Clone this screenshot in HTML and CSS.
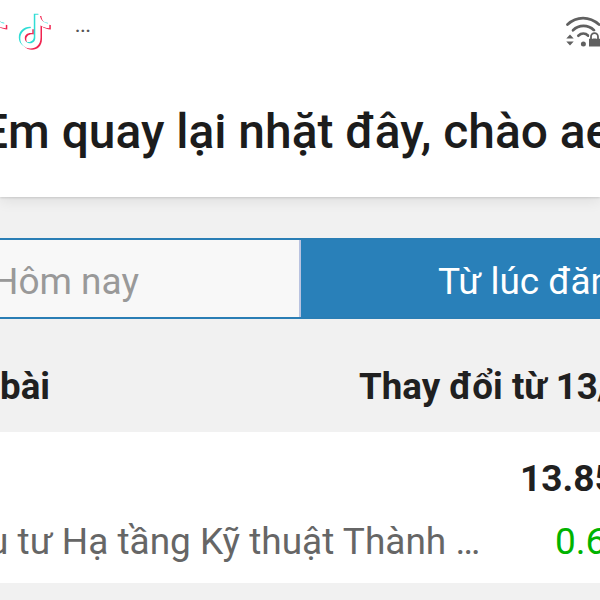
FILE: index.html
```html
<!DOCTYPE html>
<html lang="vi">
<head>
<meta charset="utf-8">
<title>Em quay lại nhặt đây</title>
<link rel="stylesheet" href="styles.css">
</head>
<body>
<header class="top">
  <div class="status">
    <svg class="apps" width="60" height="62" viewBox="0 0 60 62" fill="none">
      <defs>
        <path id="note" d="M35 14.500h4.500c.5 5 4 8.500 9.500 9v4.500c-3.500-.1-6.800-1.300-8.800-3v12.500c0 7-4.500 10.700-10 10.700-6 0-10.200-4.500-10.200-10 0-6.500 5.500-11 12-10.500v5.200c-4.500-.8-7.500 1.500-7.500 5 0 3 2.500 5 5.300 5 3.200 0 5.200-2.300 5.200-5.500z"/>
      </defs>
      <g id="logo">
        <use href="#note" x="1.800" y="1.500" fill="#f02450"/>
        <use href="#note" x="-1.200" y="-.8" fill="#30ddd5"/>
        <use href="#note" x=".3" y=".3" fill="#fff"/>
      </g>
      <use href="#logo" x="-43.500"/>
    </svg>
    <span class="more">...</span>
    <svg class="wifi" width="36" height="62" viewBox="0 0 36 62" fill="none">
      <g stroke="#606060" stroke-width="2.700" stroke-linecap="round">
        <path d="M3.500 24.500C12.500 16 25.500 16 35 24.500"/>
        <path d="M9 30.200C15 24.500 24 24.500 30 30.200"/>
        <path d="M14.300 35.700c3-2.700 7-2.700 10 0"/>
      </g>
      <circle cx="19.400" cy="44" r="2.500" fill="#606060"/>
      <path d="M2.300 38.500 6 34.500l3.700 4zM2.300 41.500 6 45.500l3.700-4z" fill="#606060"/>
      <path d="M24 37h13v11H24z" fill="#fff"/>
      <path d="M25 38.500h11V46.500H25z" fill="#606060"/>
      <path d="M27 38.500v-1.800a3.500 3.500 0 0 1 7 0v1.800" stroke="#fff" stroke-width="4"/>
      <path d="M27 39v-2.300a3.500 3.500 0 0 1 7 0V39" stroke="#606060" stroke-width="1.800"/>
    </svg>
  </div>
  <h1 class="title">Em quay lại nhặt đây, chào ae</h1>
</header>
<main>
  <nav class="tabs">
    <div class="tab">Hôm nay</div>
    <div class="tab active">Từ lúc đăng</div>
  </nav>
  <div class="heads">
    <span>bài</span>
    <span class="since">Thay đổi từ 13/</span>
  </div>
  <section class="stock">
    <div class="price">13.85</div>
    <div class="detail">
      <span class="company">u tư Hạ tầng Kỹ thuật Thành …</span>
      <span class="change">0.6</span>
    </div>
  </section>
</main>
</body>
</html>
```
FILE: styles.css
```css
* { box-sizing: border-box; }
html, body { overflow: hidden; }
body {
  margin: 0;
  width: 600px;
  height: 600px;
  background: #f1f1f1;
  color: #202020;
  font: 37px/44px Roboto, "Liberation Sans", sans-serif;
  white-space: nowrap;
}
.top {
  position: relative;
  height: 197px;
  background: #fff;
  box-shadow: 0 1px 2px rgba(0, 0, 0, .12), 0 3px 14px rgba(0, 0, 0, .09);
}
.status { display: flex; height: 62px; }
.more {
  margin-left: 15px;
  font-size: 19px;
  font-weight: 500;
  line-height: 52px;
  color: #555;
}
.wifi { margin-left: auto; }
.title {
  margin: 0 0 0 -19px;
  padding-top: 40px;
  font-size: 47.900px;
  line-height: 60px;
  font-weight: 500;
  color: #1c1c1c;
}
.tabs {
  display: flex;
  height: 81px;
  margin-top: 41px;
  border: solid #2a7eb5;
  border-width: 2px 0;
}
.tab {
  flex: 0 0 301px;
  padding: 20px 0 0;
  background: #f8f8f8;
  border-right: 2px solid #b9c3e0;
  color: #999;
  text-indent: -8px;
}
.tab.active {
  padding-left: 137px;
  background: #2980b9;
  border: 0;
  color: #fff;
  text-indent: 0;
  overflow: hidden;
}
.heads {
  display: flex;
  height: 113px;
  padding-top: 46px;
  font-size: 36.700px;
  font-weight: 700;
}
.heads span:first-child { flex: 0 0 359px; }
.stock {
  height: 151px;
  padding-top: 25px;
  background: #fff;
}
.price { padding-left: 520px; font-weight: 700; }
.detail { display: flex; padding-top: 19px; color: #666; }
.company { flex: 0 0 555px; text-indent: -12px; }
.change { color: #00b300; }
```
